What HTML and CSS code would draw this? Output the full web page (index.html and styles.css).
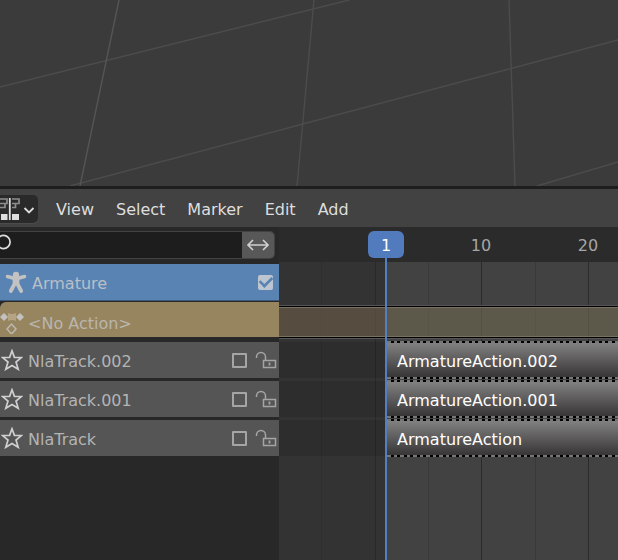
FILE: index.html
```html
<!DOCTYPE html>
<html lang="en">
<head>
<meta charset="utf-8">
<title>Nonlinear Animation</title>
<link rel="stylesheet" href="styles.css">
</head>
<body>
<svg width="0" height="0" class="defs" aria-hidden="true">
  <symbol id="star" viewBox="0 0 22 22"><path d="M11 1.800 13.400 8.300 20.500 8.500 15 13 17.200 20.300 11 16.600 4.800 20.300 7 13 1.500 8.500 8.600 8.300Z" fill="none" stroke="currentColor" stroke-width="1.700"/></symbol>
  <symbol id="unlock" viewBox="0 0 22 18"><path d="M1.500 7V6a4.500 4.500 0 0 1 9 0v3" fill="none" stroke="currentColor" stroke-width="1.500"/><path d="M8.500 9.500h12v7h-12Z" fill="none" stroke="currentColor" stroke-width="1.500"/><path d="M14.500 11.500v3" stroke="currentColor" stroke-width="1.800"/></symbol>
</svg>
<section class="viewport" aria-label="3D viewport">
  <svg viewBox="0 0 618 186" preserveAspectRatio="xMinYMin slice" aria-hidden="true">
    <path d="M314 0 297 186M509 0 515 186M0 87 349 0M70 186 618 40M537 186 618 162" fill="none" stroke="#4c4c4c" stroke-width="1.400"/>
    <path d="M119 0 80 186" stroke="#555" stroke-width="1.400"/>
  </svg>
</section>
<header class="menubar">
  <button class="editor-type" aria-label="Editor type">
    <svg width="36" height="28" viewBox="0 0 36 28" aria-hidden="true">
      <path d="M0 4h7v4.500H0M0 12.500h5v-4M12 4h7v4.500h-3.500v4H12M12 8.500h3" fill="none" stroke="#8e8e8e" stroke-width="1.700"/>
      <path d="M1 19h6.500v6H1ZM12 19h7v6h-7Z" fill="#dedede"/><path d="M9.800 3v22" stroke="#dedede" stroke-width="1.800"/>
      <path d="m24.500 13 4.500 4.500 4.500-4.500" fill="none" stroke="#dedede" stroke-width="1.800"/>
    </svg>
  </button>
  <nav class="menus"><button>View</button><button>Select</button><button>Marker</button><button>Edit</button><button>Add</button></nav>
</header>
<main class="editor">
  <aside class="channels">
    <div class="search">
      <svg width="12" height="26" viewBox="0 0 12 26" aria-hidden="true"><circle cx="3.500" cy="10" r="6.600" fill="none" stroke="#dedede" stroke-width="1.700"/></svg>
      <input type="text" aria-label="Filter channels">
      <button aria-label="Invert filter"><svg width="24" height="14" viewBox="0 0 24 14" aria-hidden="true"><path d="M2 7h20M7 2 2 7l5 5M17 2l5 5-5 5" fill="none" stroke="#cfcfcf" stroke-width="1.700"/></svg></button>
    </div>
    <div class="channel object">
      <svg width="22" height="24" viewBox="0 0 22 24" aria-hidden="true"><g fill="none" stroke="#c2c2c2" stroke-linecap="round" stroke-linejoin="round"><path d="M2.500 6.500 8 8h6l5.500-1.500" stroke-width="3.500"/><path d="M9.500 9v5L5.800 21M12.500 9v5l3.700 7" stroke-width="3.800"/></g><circle cx="11" cy="5" r="3.200" fill="#c2c2c2"/></svg>
      <label for="armature">Armature</label>
      <input type="checkbox" id="armature" class="check" checked>
    </div>
    <div class="channel action">
      <svg width="24" height="24" viewBox="0 0 24 24" aria-hidden="true"><path d="M8 3q4 2 8 0v8q-4-2-8 0Z" fill="#b5a383"/><path d="m4 3 4 4-4 4-4-4ZM20 3l4 4-4 4-4-4Z" fill="#c2c2c2"/><path d="m11.500 14 4.500 5-4.500 5L7 19Z" fill="none" stroke="#bcb8b0" stroke-width="1.500"/></svg>
      <span>&lt;No Action&gt;</span>
    </div>
    <div class="channel track"><svg class="star" aria-hidden="true"><use href="#star"/></svg><label for="track2">NlaTrack.002</label><input type="checkbox" id="track2"><button aria-label="Lock NlaTrack.002"><svg class="lock"><use href="#unlock"/></svg></button></div>
    <div class="channel track"><svg class="star" aria-hidden="true"><use href="#star"/></svg><label for="track1">NlaTrack.001</label><input type="checkbox" id="track1"><button aria-label="Lock NlaTrack.001"><svg class="lock"><use href="#unlock"/></svg></button></div>
    <div class="channel track"><svg class="star" aria-hidden="true"><use href="#star"/></svg><label for="track0">NlaTrack</label><input type="checkbox" id="track0"><button aria-label="Lock NlaTrack"><svg class="lock"><use href="#unlock"/></svg></button></div>
  </aside>
  <section class="timeline" aria-label="Timeline">
    <div class="ruler"><span class="frame">1</span><span class="tick">10</span><span class="tick">20</span></div>
    <div class="canvas">
      <div class="action-band"></div>
      <div class="lane"><div class="strip">ArmatureAction.002</div></div>
      <div class="lane"><div class="strip">ArmatureAction.001</div></div>
      <div class="lane"><div class="strip">ArmatureAction</div></div>
    </div>
    <div class="playhead"></div>
  </section>
</main>
</body>
</html>
```

FILE: styles.css
```css
* { box-sizing: border-box; }
body {
  margin: 0;
  min-height: 100vh;
  display: flex;
  flex-direction: column;
  background: #282828;
  color: #dedede;
  font: 16px/20px "DejaVu Sans", sans-serif;
  overflow: hidden;
}
button, input { margin: 0; padding: 0; border: 0; font: inherit; color: inherit; background: none; }
svg { display: block; flex: none; }
.defs { position: absolute; }
.viewport { height: 189px; background: #3b3b3b; border-bottom: 3px solid #1e1e1e; }
.viewport svg { width: 100%; height: 100%; }

.menubar { display: flex; align-items: center; gap: 18px; height: 38px; padding-top: 2px; background: #424242; }
.editor-type { width: 38px; height: 28px; background: #2a2a2a; border-radius: 0 5px 5px 0; box-shadow: 0 1px #4c4c4c; }
.menus { display: flex; gap: 22px; padding-top: 1px; text-shadow: 0 1px 1px #222; }

.editor { flex: 1; display: grid; grid-template-columns: 279px 1fr; }
.channels { background: #282828; color: #b4b4b4; }
.search { display: flex; align-items: center; height: 28px; margin: 4px 4px 5px 0; background: #1d1d1d; border: 1px solid #424242; border-left: 0; border-radius: 0 5px 5px 0; overflow: hidden; }
.search input { flex: 1; min-width: 0; height: 100%; outline: 0; }
.search button { display: grid; place-items: center; width: 32px; height: 100%; background: #585858; }

.channel { display: flex; align-items: center; height: 36px; margin-bottom: 3px; padding-right: 2px; }
.channel label, .channel span { flex: 1; padding-top: 3px; }
.channel.object { height: 37px; margin-bottom: 1px; padding: 0 6px 0 5px; gap: 5px; background: #5983b3; border-bottom: 1px solid #3b577a; color: #b9bfc6; }
.channel.action { height: 35px; margin-bottom: 5px; padding-top: 5px; gap: 4px; background: #97855f; border-radius: 6px 0 0 0; color: #bab6ae; }
.channel.track { background: #555; }
.star { width: 22px; height: 22px; margin: 0 5px 0 1px; color: #d0d0d0; }
.lock { width: 22px; height: 18px; color: #a5a5a5; }
.channel input { appearance: none; width: 15px; height: 15px; margin-right: 8px; border: 2px solid #a5a5a5; border-radius: 1px; }
.channel input.check { margin: 0; border: 0; border-radius: 2px; background: #bdc6d0; display: grid; place-items: center; }
.channel input.check::before { content: ""; width: 11px; height: 6px; margin-bottom: 3px; border: solid #5983b3; border-width: 0 0 3px 3px; rotate: -45deg; scale: 0.9; }

.timeline { position: relative; display: flex; flex-direction: column; background: #424242; overflow: hidden; }
.ruler { position: relative; height: 35px; background: #2b2b2b; color: #a6a6a6; }
.ruler span { position: absolute; top: 9px; left: 202px; translate: -50%; }
.ruler .tick + .tick { left: 309px; }
.ruler .frame { left: 107px; top: 4px; width: 36px; height: 27px; z-index: 2; line-height: 29px; text-align: center; color: #fff; background: #527bbd; border-radius: 6px; }
.playhead { position: absolute; top: 30px; bottom: 0; left: 106px; width: 2px; background: #527fc4; }
.canvas {
  flex: 1;
  padding-top: 44px;
  background:
    repeating-linear-gradient(90deg, transparent 0 95px, #2c2c2c 95px 96px, transparent 96px 107px) 107px 0 no-repeat,
    repeating-linear-gradient(90deg, transparent 0 42px, #393939 42px 43px, transparent 43px 107px) 107px 0 no-repeat,
    linear-gradient(90deg, transparent 42px, #2e2e2e 42px 43px, transparent 43px 96px, #292929 96px 97px, transparent 97px),
    linear-gradient(90deg, #333 107px, #424242 107px);
}
.action-band { height: 32px; margin-bottom: 4px; border: solid #000; border-width: 1px 0; background: linear-gradient(90deg, #6e5d4999 107px, #6f684f99 107px); box-shadow: inset 0 1px #777260, inset 0 -1px #777260, 0 -1px #555, 0 1px #555; }
.lane { height: 36px; margin-bottom: 3px; background: linear-gradient(90deg, #00000020 107px, transparent 107px); }
.strip {
  position: relative;
  height: 36px;
  margin-left: 108px;
  padding: 10px;
  color: #fff;
  background: linear-gradient(#848384, #353334);
}
.strip::before, .strip::after { content: ""; position: absolute; left: 0; right: 0; top: -1px; height: 2px; background: repeating-linear-gradient(90deg, #777 0 4px, #000 4px 7px, #777 7px 10px, #000 10px 13px); }
.strip::after { top: auto; bottom: -1px; }
```
